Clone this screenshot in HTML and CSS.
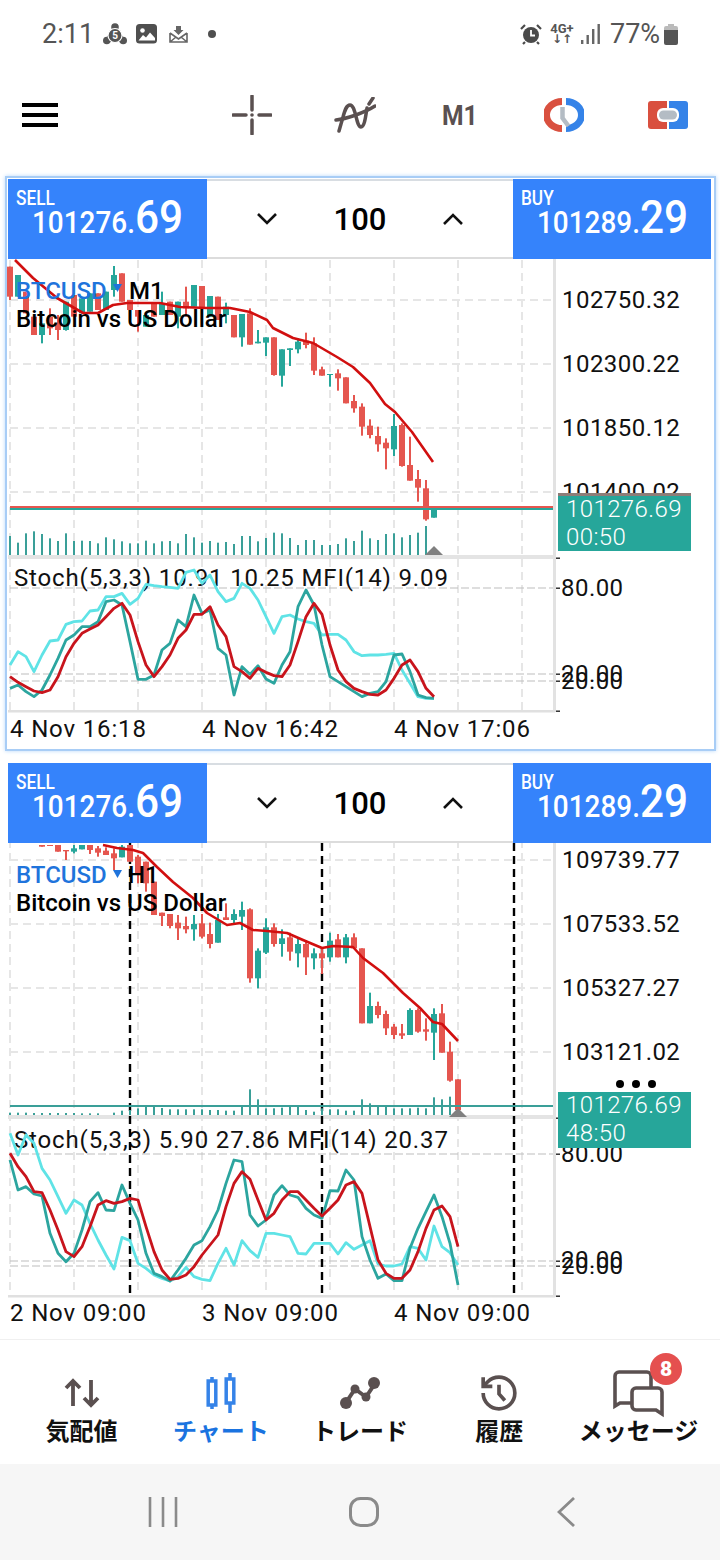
FILE: index.html
```html
<!DOCTYPE html>
<html lang="ja">
<head>
  <meta charset="UTF-8">
  <meta name="viewport" content="width=device-width, initial-scale=1.0">
  <title>BTCUSD charts</title>
  <link rel="stylesheet" href="styles.css">
</head>
<body>
  <div class="status">
    <div class="status__group">
      <span class="status__time">2:11</span>
      <svg class="status__icon status__icon--notif" width="24" height="22" viewBox="0 0 24 22">
        <path d="M12 4 3.500 17.500h17z" fill="#555" stroke="#555" stroke-width="3"/>
        <circle cx="12" cy="4" r="3.800" fill="#555"/><circle cx="3.800" cy="17.500" r="3.800" fill="#555"/><circle cx="20.200" cy="17.500" r="3.800" fill="#555"/>
        <circle cx="12" cy="12.500" r="7" fill="#555" stroke="#fff" stroke-width="1.200"/>
        <text class="status__five" x="12" y="16.400" text-anchor="middle">5</text>
      </svg>
      <svg class="status__icon status__icon--image" width="22" height="20" viewBox="0 0 22 20">
        <rect width="21" height="19.500" rx="3.500" fill="#4f4f4f"/>
        <circle cx="6.500" cy="6.500" r="2.300" fill="#fff"/>
        <path d="M2.500 16.500 7 11l3 2.500 4-5 5 5.500v2.500z" fill="#fff"/>
      </svg>
      <svg class="status__icon status__icon--mail" width="19" height="17" viewBox="0 0 19 17">
        <path d="M1 7v9h17V7M1 7l8.500 6L18 7M1 16l6-5M18 16l-6-5" fill="none" stroke="#666" stroke-width="1.600"/>
        <path d="M7 0h5v4h2.500L9.500 9 4.500 4H7z" fill="#666"/>
      </svg>
      <span class="status__dot"></span>
    </div>
    <div class="status__group">
      <svg class="status__icon" width="22" height="22" viewBox="0 0 22 22">
        <circle cx="11" cy="12" r="8" fill="#4a4a4a"/>
        <path d="M11 7v5.500h4" fill="none" stroke="#fff" stroke-width="1.800"/>
        <path d="M1 6l4-4M21 6l-4-4M5 19l-2 2M17 19l2 2" stroke="#4a4a4a" stroke-width="2.200"/>
      </svg>
      <span class="status__net"><span>4G+</span><span class="status__arrows">↓↑</span></span>
      <svg class="status__icon status__icon--signal" width="19" height="22" viewBox="0 0 19 22">
        <rect x="0" y="17" width="2.400" height="4" fill="#666"/>
        <rect x="5.500" y="12" width="2.400" height="9" fill="#666"/>
        <rect x="11" y="6" width="2.400" height="15" fill="#666"/>
        <rect x="16.500" y="1" width="2.400" height="20" fill="#666"/>
      </svg>
      <span class="status__battery-text">77%</span>
      <svg class="status__icon" width="14" height="21" viewBox="0 0 14 21">
        <path d="M4 0h6v2h2a2 2 0 0 1 2 2v3H0V4a2 2 0 0 1 2-2h2z" fill="#bbb"/>
        <path d="M0 6h14v13a2 2 0 0 1-2 2H2a2 2 0 0 1-2-2z" fill="#555"/>
      </svg>
    </div>
  </div>

  <div class="toolbar">
    <div class="toolbar__burger"><span></span><span></span><span></span></div>
    <svg class="toolbar__cross" width="40" height="40" viewBox="0 0 40 40">
      <path d="M20 1v14M20 25v14M1 20h13M27 20h12" stroke="#5a5050" stroke-width="3.500" stroke-linecap="round"/>
      <circle cx="20" cy="20" r="1.800" fill="#5a5050"/>
    </svg>
    <svg class="toolbar__wave" width="42" height="36" viewBox="0 0 42 36">
      <path d="M5 34l2-7C10 18 11 8 16 8c6 0 6 22 11 22 4 0 5-14 6-19" fill="none" stroke="#5a5050" stroke-width="3.500" stroke-linecap="round"/>
      <path d="M2 23c10-1 28-7 39-14M35 7l4-6" fill="none" stroke="#5a5050" stroke-width="3.500" stroke-linecap="round"/>
    </svg>
    <span class="toolbar__period">M1</span>
    <svg class="toolbar__clock" width="40" height="34" viewBox="0 0 40 34">
      <path d="M18 3.500A15.500 13.500 0 0 0 18 30.500" fill="none" stroke="#d9503f" stroke-width="7"/>
      <path d="M22 3.500A15.500 13.500 0 0 1 22 30.500" fill="none" stroke="#3583e8" stroke-width="7"/>
      <path d="M18.500 9v11l6 8" fill="none" stroke="#b4bcc4" stroke-width="4.500"/>
    </svg>
    <svg class="toolbar__colors" width="40" height="28" viewBox="0 0 40 28">
      <path d="M3 0h16v28H3a3 3 0 0 1-3-3V3a3 3 0 0 1 3-3z" fill="#d9503f"/>
      <path d="M21 0h16a3 3 0 0 1 3 3v22a3 3 0 0 1-3 3H21z" fill="#3583e8"/>
      <rect x="9" y="7" width="22" height="14" rx="6" fill="#fff"/>
      <rect x="11" y="9.500" width="18" height="9" rx="4.500" fill="#b4bcc4"/>
    </svg>
  </div>

  <section class="chart chart--active">
    <div class="trade">
      <div class="quote">
        <span class="quote__label">SELL</span>
        <span class="quote__price">101276.<b>69</b></span>
      </div>
      <div class="stepper">
        <svg width="20" height="12" viewBox="0 0 20 12"><path d="M1 1l9 9 9-9" fill="none" stroke="#111" stroke-width="2.600"/></svg>
        <span class="stepper__value">100</span>
        <svg width="20" height="12" viewBox="0 0 20 12"><path d="M1 11l9-9 9 9" fill="none" stroke="#111" stroke-width="2.600"/></svg>
      </div>
      <div class="quote quote--buy">
        <span class="quote__label">BUY</span>
        <span class="quote__price">101289.<b>29</b></span>
      </div>
    </div>
    <svg class="plot" id="chart-m1" viewBox="7 259 707 490" width="707" height="490">
      <g class="plot__back"></g>
      <text class="plot__text" x="14" y="586">Stoch(5,3,3) 10.91 10.25 MFI(14) 9.09</text>
      <g class="plot__front"></g>
      <text class="plot__symbol" x="16" y="299">BTCUSD</text>
      <path class="plot__caret" d="M113 284h9l-4.500 8z"/>
      <text class="plot__name" x="129" y="299">M1</text>
      <text class="plot__name" x="16" y="327">Bitcoin vs US Dollar</text>
      <text class="plot__price" x="562" y="308">102750.32</text>
      <text class="plot__price" x="562" y="372">102300.22</text>
      <text class="plot__price" x="562" y="436">101850.12</text>
      <text class="plot__price" x="562" y="500">101400.02</text>
      <text class="plot__price" x="561" y="596">80.00</text>
      <text class="plot__price" x="561" y="682">20.00</text>
      <text class="plot__price" x="561" y="689">20.00</text>
      <text class="plot__text" x="10" y="737">4 Nov 16:18</text>
      <text class="plot__text" x="202" y="737">4 Nov 16:42</text>
      <text class="plot__text" x="394" y="737">4 Nov 17:06</text>
      <rect class="plot__tag-top" x="558" y="493" width="133" height="3"/>
      <rect class="plot__tag" x="558" y="496" width="133" height="55"/>
      <text class="plot__tag-text" x="566" y="517">101276.69</text>
      <text class="plot__tag-text" x="566" y="545">00:50</text>
    </svg>
  </section>

  <section class="chart">
    <div class="trade">
      <div class="quote">
        <span class="quote__label">SELL</span>
        <span class="quote__price">101276.<b>69</b></span>
      </div>
      <div class="stepper">
        <svg width="20" height="12" viewBox="0 0 20 12"><path d="M1 1l9 9 9-9" fill="none" stroke="#111" stroke-width="2.600"/></svg>
        <span class="stepper__value">100</span>
        <svg width="20" height="12" viewBox="0 0 20 12"><path d="M1 11l9-9 9 9" fill="none" stroke="#111" stroke-width="2.600"/></svg>
      </div>
      <div class="quote quote--buy">
        <span class="quote__label">BUY</span>
        <span class="quote__price">101289.<b>29</b></span>
      </div>
    </div>
    <svg class="plot" id="chart-h1" viewBox="7 843 707 490" width="707" height="490">
      <g class="plot__back"></g>
      <text class="plot__text" x="14" y="1148">Stoch(5,3,3) 5.90 27.86 MFI(14) 20.37</text>
      <g class="plot__front"></g>
      <text class="plot__symbol" x="16" y="883">BTCUSD</text>
      <path class="plot__caret" d="M113 870h9l-4.500 8z"/>
      <text class="plot__name" x="128" y="883">H1</text>
      <text class="plot__name" x="16" y="911">Bitcoin vs US Dollar</text>
      <text class="plot__price" x="562" y="868">109739.77</text>
      <text class="plot__price" x="562" y="932">107533.52</text>
      <text class="plot__price" x="562" y="996">105327.27</text>
      <text class="plot__price" x="562" y="1060">103121.02</text>
      <text class="plot__price" x="561" y="1162">80.00</text>
      <text class="plot__price" x="561" y="1268">20.00</text>
      <text class="plot__price" x="561" y="1274">20.00</text>
      <text class="plot__text" x="10" y="1321">2 Nov 09:00</text>
      <text class="plot__text" x="202" y="1321">3 Nov 09:00</text>
      <text class="plot__text" x="394" y="1321">4 Nov 09:00</text>
      <circle cx="620" cy="1084" r="4"/><circle cx="636" cy="1084" r="4"/><circle cx="652" cy="1084" r="4"/>
      <rect class="plot__tag" x="558" y="1092" width="133" height="56"/>
      <text class="plot__tag-text" x="566" y="1113">101276.69</text>
      <text class="plot__tag-text" x="566" y="1141">48:50</text>
    </svg>
  </section>

  <nav class="tabs">
    <a class="tab">
      <svg width="36" height="30" viewBox="0 0 36 30"><path d="M9 28V3M2 10l7-7 7 7M27 2v25M20 20l7 7 7-7" fill="none" stroke="#5a5050" stroke-width="3.800"/></svg>
      <span>気配値</span>
    </a>
    <a class="tab tab--active">
      <svg width="30" height="40" viewBox="0 0 30 40">
        <path d="M6 4v32M24 0v40" stroke="#3583e8" stroke-width="3.500"/>
        <rect x="2.200" y="8" width="7.600" height="24" fill="#fff" stroke="#3583e8" stroke-width="3.500"/>
        <rect x="20.200" y="6" width="7.600" height="24" fill="#fff" stroke="#3583e8" stroke-width="3.500"/>
      </svg>
      <span>チャート</span>
    </a>
    <a class="tab">
      <svg width="40" height="34" viewBox="0 0 40 34">
        <path d="M5 28 15 13l11 8L36 6" fill="none" stroke="#5a5050" stroke-width="4"/>
        <circle cx="6" cy="27" r="6" fill="#5a5050"/><circle cx="15" cy="13" r="4.500" fill="#5a5050"/><circle cx="26" cy="21" r="4.500" fill="#5a5050"/><circle cx="34" cy="7" r="6" fill="#5a5050"/>
      </svg>
      <span>トレード</span>
    </a>
    <a class="tab">
      <svg width="40" height="40" viewBox="0 0 24 24" fill="none" stroke="#5a5050" stroke-width="2.200">
        <path d="M2.500 12a9.500 9.500 0 1 0 9.500-9.500 9.750 9.750 0 0 0-6.740 2.740L2.500 8"/><path d="M2.500 2.500V8H8"/><path d="M12 7v5.500l3.500 4"/>
      </svg>
      <span>履歴</span>
    </a>
    <a class="tab">
      <svg width="52" height="46" viewBox="0 0 52 46" fill="none" stroke="#5a5050" stroke-width="3.600">
        <path d="M22 33H8l-5 3V6a4 4 0 0 1 4-4h28a4 4 0 0 1 4 4v12"/>
        <path d="M24 18h22a4 4 0 0 1 4 4v22l-6-4H24a4 4 0 0 1-4-4V22a4 4 0 0 1 4-4z" fill="#fff"/>
      </svg>
      <span>メッセージ</span>
      <b class="tab__badge">8</b>
    </a>
  </nav>

  <div class="navbar">
    <svg width="30" height="30" viewBox="0 0 30 30"><path d="M2 0v30M15 0v30M28 0v30" stroke="#8a8a8a" stroke-width="2.600"/></svg>
    <svg width="30" height="30" viewBox="0 0 30 30"><rect x="1.500" y="1.500" width="27" height="27" rx="10" fill="none" stroke="#8a8a8a" stroke-width="3"/></svg>
    <svg width="18" height="30" viewBox="0 0 18 30"><path d="M17 1 2 15l15 14" fill="none" stroke="#8a8a8a" stroke-width="2.800"/></svg>
  </div>

  <script src="chart.js"></script>
</body>
</html>
```

FILE: styles.css
```css
* {
  box-sizing: border-box;
}

body {
  margin: 0;
  width: 720px;
  height: 1560px;
  overflow: hidden;
  background: #fff;
  font-family: Roboto, "Noto Sans CJK JP", sans-serif;
}

.status {
  height: 68px;
  padding: 0 42px;
  display: flex;
  justify-content: space-between;
  align-items: center;
  color: #555;
}
.status__group {
  display: flex;
  align-items: center;
}
.status__time {
  font-size: 27px;
  width: 61px;
}
.status__icon--notif {
  margin-right: 9px;
}
.status__icon--image {
  margin-right: 11px;
}
.status__five {
  font-size: 10px;
  font-weight: 700;
  fill: #fff;
}
.status__dot {
  width: 8px;
  height: 8px;
  margin-left: 20px;
  border-radius: 50%;
  background: #4f4f4f;
}
.status__net {
  display: flex;
  flex-direction: column;
  align-items: center;
  margin: 0 8px 0 9px;
  width: 22px;
  font-size: 13px;
  font-weight: 700;
  line-height: 11px;
}
.status__arrows {
  font-family: "DejaVu Sans", sans-serif;
  font-size: 12px;
}
.status__battery-text {
  margin: 0 5px 0 10px;
  font-size: 27px;
  width: 49px;
}

.toolbar {
  height: 94px;
  margin-bottom: 14px;
  padding-left: 22px;
  display: flex;
  align-items: center;
}
.toolbar__burger {
  width: 36px;
  margin-right: 174px;
  display: flex;
  flex-direction: column;
  gap: 6px;
}
.toolbar__burger span {
  height: 4px;
  background: #000;
}
.toolbar__wave {
  margin-left: 62px;
}
.toolbar__period {
  margin-left: 66px;
  width: 102px;
  font-size: 28px;
  font-weight: 700;
  color: #5a5050;
  transform: scaleX(0.88);
  transform-origin: left;
}
.toolbar__colors {
  margin-left: 64px;
}

.chart {
  width: 711px;
  height: 575px;
  margin-left: 5px;
  padding: 1px 0 0 1px;
  border: 2px solid transparent;
}
.chart + .chart {
  margin-top: 9px;
}
.chart--active {
  border-color: #a8cdf6;
  box-shadow: 0 0 4px #b9d8fa;
}

.trade {
  width: 703px;
  height: 80px;
  display: flex;
}
.quote {
  width: 199px;
  padding: 10px 0 0 8px;
  background: #3583fb;
  color: #fff;
  overflow: hidden;
}
.quote--buy {
  width: 198px;
}
.quote__label {
  display: block;
  height: 16px;
  font-size: 21px;
  font-weight: 500;
  line-height: 18px;
  transform: scaleX(0.82);
  transform-origin: left;
}
.quote__price {
  display: block;
  margin: -11px 0 0 16px;
  font-size: 31px;
  font-weight: 500;
  line-height: 46px;
  white-space: nowrap;
  transform: scaleX(0.9);
  transform-origin: left;
}
.quote__price b {
  font-size: 47px;
  font-weight: 500;
}

.stepper {
  flex: 1;
  padding: 0 50px;
  display: flex;
  justify-content: space-between;
  align-items: center;
  border-top: 2px solid #d8dde2;
  border-bottom: 2px solid #dcdcdc;
}
.stepper__value {
  font-size: 31px;
  font-weight: 500;
}

.plot {
  display: block;
  margin-left: -1px;
}
.plot__text {
  font-size: 24px;
  letter-spacing: 0.85px;
  fill: #111;
}
.plot__price {
  font-size: 24px;
  letter-spacing: 0.45px;
  fill: #111;
}
.plot__symbol {
  font-size: 24px;
  font-weight: 500;
  fill: #1f74dc;
}
.plot__caret {
  fill: #1f74dc;
}
.plot__name {
  font-size: 24px;
  font-weight: 500;
  fill: #000;
}
.plot__tag {
  fill: #26a69a;
}
.plot__tag-top {
  fill: #8d7d78;
}
.plot__tag-text {
  font-size: 24px;
  font-weight: 300;
  letter-spacing: 0.4px;
  fill: #fff;
}

.tabs {
  height: 125px;
  margin-top: 4px;
  padding: 0 12px;
  display: flex;
  border-top: 1px solid #f0f0f0;
}
.tab {
  position: relative;
  flex: 1;
  display: flex;
  flex-direction: column;
  align-items: center;
  font-size: 24px;
  font-weight: 700;
  color: #111;
}
.tab svg {
  height: 46px;
  margin-top: 30px;
  overflow: visible;
}
.tab span {
  line-height: 34px;
  margin-top: -1px;
  white-space: nowrap;
}
.tab--active {
  color: #1a73e0;
}
.tab__badge {
  position: absolute;
  top: 13px;
  right: 26px;
  width: 32px;
  height: 32px;
  border-radius: 50%;
  background: #e5504f;
  color: #fff;
  font-size: 21px;
  line-height: 32px;
  text-align: center;
}

.navbar {
  height: 96px;
  padding-left: 62px;
  display: grid;
  grid-template-columns: 201px 202px 202px;
  justify-items: center;
  align-items: center;
  background: #f6f6f6;
}
```

FILE: chart.js
```js
const SVG_NS = 'http://www.w3.org/2000/svg'
const GREEN = '#26a69a'
const RED = '#e5564f'

// prices are read off a 3x crop, so y values below are in thirds of a pixel
const m1 = {
  id: 'chart-m1',
  top: 260, paneTop: 555, sep: 557, bottom: 711,
  grid: [300, 364, 428, 492],
  levels: [588, 674, 681],
  ticks: [558, 588, 674, 681, 711],
  triangle: 434, triY: 546,
  volBase: 885,
  ma: '15,260 33,278 57,298 83,313 98,313 113,305 127,303 160,303 180,307 207,308 230,308 250,312 267,320 273,328 293,338 313,343 337,357 353,367 370,383 385,404 395,412 412,432 433,462',
  // [green?, bodyTop, bodyBottom, wickTop, wickBottom]
  candles: [
    [0,20,110,20,120],[1,45,110,45,110],[0,95,160,95,160],[0,170,225,170,225],[1,190,225,190,250],[0,170,205,145,225],
    [0,190,210,165,240],[1,125,210,125,212],[0,105,170,105,170],[1,115,160,115,160],[1,100,155,100,155],[0,100,150,100,150],
    [1,95,150,95,150],[1,45,90,18,110],[0,40,125,40,125],[0,120,150,120,170],[0,150,170,150,215],[1,165,200,165,200],
    [0,130,170,130,170],[1,130,165,95,165],[0,125,165,125,165],[1,125,170,125,205],[0,125,145,80,170],[1,75,140,75,140],
    [0,78,145,78,145],[1,108,170,108,170],[0,110,180,110,180],[1,140,165,128,190],[0,165,232,165,232],[1,162,232,162,260],
    [0,160,254,145,254],[1,245,250,210,250],[1,232,248,232,288],[0,232,345,232,347],[1,268,347,268,380],[1,265,270,265,318],
    [1,245,268,235,280],[0,242,255,218,265],[0,250,332,232,345],[0,328,347,320,347],[1,342,345,342,380],[0,340,355,328,392],
    [0,352,430,352,430],[0,423,445,405,458],[0,440,500,430,527],[0,497,525,478,535],[0,528,553,500,575],[0,548,565,535,628],
    [1,498,568,462,588],[0,495,618,490,620],[0,615,662,530,662],[0,657,683,630,725],[0,685,778,660,782],[1,745,773,745,773]
  ],
  volume: [828,848,820,814,822,835,843,820,843,842,843,850,832,838,844,850,850,842,850,844,843,850,822,832,848,843,848,846,852,828,828,844,834,818,820,834,855,840,840,855,855,852,835,843,812,835,840,822,820,832,825,818,798],
  bid: [[507, RED], [509, GREEN]],
  stochBase: 555,
  cyan: [330,290,305,350,300,258,255,208,200,198,168,165,125,125,115,148,130,88,92,95,97,100,52,45,85,60,110,140,130,85,100,135,185,235,185,180,192,200,205,240,238,238,255,290,302,300,300,298,295,345,385,425,430,430],
  teal: [400,390,410,425,405,360,310,255,240,215,215,200,140,135,150,260,373,373,360,285,265,195,215,120,175,165,280,300,420,335,358,332,372,385,330,290,155,105,150,270,365,380,395,410,425,415,410,380,300,297,350,420,428,430],
  red: [365,382,395,408,413,405,365,305,265,235,222,210,185,160,145,180,260,330,365,335,300,250,225,178,178,155,210,245,335,350,370,340,352,362,365,330,260,185,145,178,270,345,380,400,410,418,420,405,370,330,315,350,400,425]
}

const h1 = {
  id: 'chart-h1',
  top: 840, paneTop: 1115, sep: 1117, bottom: 1296,
  grid: [860, 924, 988, 1052],
  levels: [1154, 1261, 1266],
  ticks: [1118, 1154, 1261, 1266, 1296],
  triangle: 458, triY: 1108,
  volBase: 825,
  separators: [130, 322, 514],
  ma: '103,845 117,848 133,850 143,853 157,867 173,882 193,898 207,913 227,925 240,923 253,930 267,931 287,933 303,940 322,948 333,946 353,947 363,958 383,973 403,993 420,1008 433,1022 442,1024 458,1041',
  candles: [
    null,null,null,null,
    [0,15,20,15,20],[0,15,18,15,18],[0,15,35,15,35],[0,30,34,30,60],[1,25,35,15,40],[1,15,28,15,28],[0,15,30,15,42],[0,25,38,18,50],
    [0,32,45,22,45],[0,40,55,25,90],[1,20,52,15,52],[0,15,65,15,65],[0,50,100,45,130],[0,65,130,65,155],[0,125,225,125,225],[0,218,228,218,258],
    [0,222,258,222,265],[0,248,265,225,300],[0,258,268,230,280],[1,252,268,225,302],[0,250,290,222,295],[0,282,312,248,325],[1,240,308,222,308],[0,232,240,190,240],
    [1,222,240,208,255],[1,210,230,185,270],[0,208,415,205,428],[1,332,415,325,445],[1,262,338,235,342],[0,262,312,250,320],[1,295,312,268,350],[0,292,335,278,362],
    [1,312,340,295,382],[0,312,352,300,405],[1,340,355,325,388],[0,340,355,322,402],[1,302,352,278,365],[0,298,352,282,352],[1,292,352,282,370],[0,292,325,280,325],
    [0,325,550,325,550],[1,498,550,458,550],[0,498,525,485,535],[0,522,565,512,585],[0,560,585,552,597],[0,580,587,552,597],[1,510,585,505,585],[0,510,575,505,578],
    [0,568,575,535,602],[1,522,578,505,660],[0,520,638,492,638],[0,635,722,605,725],[0,718,810,718,810]
  ],
  volume: [818,818,818,819,819,819,819,819,819,820,820,820,0,818,812,810,805,800,800,804,808,808,808,808,808,810,810,812,812,800,748,778,805,805,803,800,800,810,815,805,808,808,812,812,778,790,800,800,805,805,805,803,805,772,778,770],
  bid: [[1106, '#3a9f98']],
  stochBase: 1120,
  cyan: [40,105,45,70,145,180,230,280,240,255,310,360,405,447,352,362,430,445,465,475,483,470,442,470,478,482,430,385,435,362,392,412,340,340,345,350,400,402,370,370,370,402,368,388,375,362,432,438,438,432,380,385,420,318,380,398,435],
  teal: [120,210,200,222,228,340,400,425,400,330,245,218,270,272,195,250,300,400,460,470,483,450,415,375,362,320,270,190,120,125,285,318,300,225,197,225,232,265,285,295,212,213,150,180,350,420,475,462,482,482,385,325,275,225,290,370,495],
  red: [100,140,170,215,218,270,330,395,410,380,320,255,242,250,245,235,240,320,395,450,478,475,465,440,405,375,345,260,190,155,178,240,300,280,240,215,215,240,265,288,265,240,195,185,220,320,420,460,475,475,450,395,325,270,258,290,380]
}

const add = (parent, name, attrs) => {
  const node = document.createElementNS(SVG_NS, name)
  for (const key in attrs) node.setAttribute(key, attrs[key])
  parent.appendChild(node)
  return node
}

const xOf = k => 10 + 8 * k

function draw(c) {
  const svg = document.getElementById(c.id)
  const back = svg.querySelector('.plot__back')
  const front = svg.querySelector('.plot__front')

  // dashed grid
  const gridLine = { stroke: '#e6e6e6', 'stroke-width': 2, 'stroke-dasharray': '8 5' }
  for (let x = 10; x < 553; x += 64) {
    add(back, 'line', { x1: x, x2: x, y1: c.top, y2: c.bottom, ...gridLine })
  }
  c.grid.forEach(y => add(back, 'line', { x1: 10, x2: 553, y1: y, y2: y, ...gridLine }))
  c.levels.forEach(y => {
    add(back, 'line', { x1: 10, x2: 553, y1: y, y2: y, stroke: '#bdbdbd', 'stroke-width': 1.2, 'stroke-dasharray': '8 3' })
  })

  // frame of the plot
  add(back, 'rect', { x: 8, y: c.sep - 2, width: 547, height: 4, fill: '#e4e4e4' })
  add(back, 'rect', { x: 8, y: c.bottom - 1, width: 547, height: 2.5, fill: '#e0e0e0' })
  add(back, 'rect', { x: 553, y: c.top - 1, width: 3, height: c.bottom - c.top + 2, fill: '#e2e2e2' })
  c.ticks.forEach(y => add(back, 'rect', { x: 556, y: y - 0.5, width: 4, height: 1.4, fill: '#222' }))

  // period separators go over the indicator title too
  ;(c.separators || []).forEach(x => {
    add(front, 'line', { x1: x, x2: x, y1: c.top + 3, y2: c.bottom, stroke: '#000', 'stroke-width': 2.4, 'stroke-dasharray': '8 5' })
  })

  // volume
  c.volume.forEach((top, k) => {
    if (!top) return
    const y = c.top + top / 3
    add(front, 'rect', { x: xOf(k) - 1, y, width: 2, height: (c.volBase - top) / 3, fill: '#3a9f98' })
  })

  // candles
  c.candles.forEach((d, k) => {
    if (!d) return
    const fill = d[0] ? GREEN : RED
    const y = z => c.top + z / 3
    add(front, 'rect', { x: xOf(k) - 1, y: y(d[3]), width: 2, height: (d[4] - d[3]) / 3, fill })
    add(front, 'rect', { x: xOf(k) - 3, y: y(d[1]), width: 6, height: Math.max(1, (d[2] - d[1]) / 3), fill })
  })

  // bid line
  c.bid.forEach(([y, stroke]) => add(front, 'line', { x1: 10, x2: 553, y1: y, y2: y, stroke, 'stroke-width': 2 }))

  add(front, 'polyline', { points: c.ma, fill: 'none', stroke: '#d10f0f', 'stroke-width': 2.6, 'stroke-linejoin': 'round' })
  add(front, 'path', { d: `M${c.triangle - 9} ${c.triY + 9}L${c.triangle} ${c.triY}L${c.triangle + 9} ${c.triY + 9}z`, fill: '#808080' })

  // stochastic + mfi
  const series = [[c.cyan, '#5fe3e6'], [c.teal, '#2ca59f'], [c.red, '#c8141c']]
  series.forEach(([vals, stroke]) => {
    const points = vals.map((z, k) => `${xOf(k)},${c.stochBase + z / 3}`).join(' ')
    add(front, 'polyline', { points, fill: 'none', stroke, 'stroke-width': 2.8, 'stroke-linejoin': 'round' })
  })
}

draw(m1)
draw(h1)
```
